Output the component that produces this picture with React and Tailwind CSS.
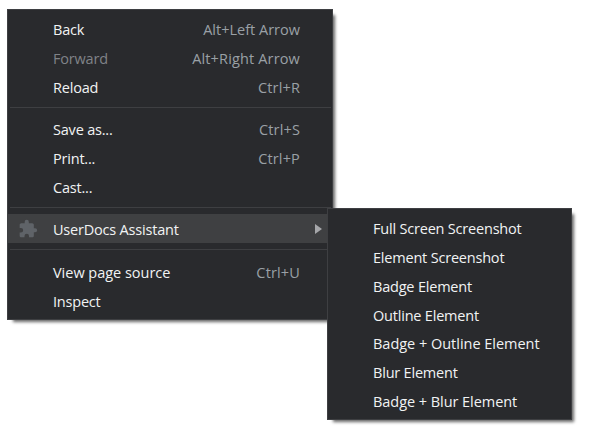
const shadow = "shadow-[4px_4px_3px_-2px_rgba(0,0,0,0.6)]";

function Row({ label, shortcut, disabled, tracking = "tracking-[0.15px]" }) {
  return (
    <div className="flex h-[29px] items-center justify-between pl-[45px] pr-[32px]">
      <span className={disabled ? "text-[#808388]" : "text-[#f1f3f4]"}>{label}</span>
      {shortcut && <span className={`text-[#9aa0a6] ${tracking}`}>{shortcut}</span>}
    </div>
  );
}

function Separator({ className }) {
  return <div className={`ml-[2px] mr-px h-px bg-[#3e3f42] ${className}`} />;
}

const actions = [
  { label: "Full Screen Screenshot" },
  { label: "Element Screenshot" },
  { label: "Badge Element" },
  { label: "Outline Element", className: "-mb-px" },
  { label: "Badge + Outline Element", className: "tracking-[-0.02px]" },
  { label: "Blur Element" },
  { label: "Badge + Blur Element", className: "tracking-[-0.05px]" },
];

export default function App() {
  return (
    <div className="relative h-[444px] w-[596px] overflow-hidden bg-white pl-[7px] pt-[9px] font-['Open_Sans','Noto_Sans',sans-serif] text-[14.5px] leading-[20px] tracking-[-0.2px] whitespace-nowrap">
      <div className={`h-[311px] w-[326px] border border-[#3e3f42] bg-[#292a2d] pt-[5px] ${shadow}`}>
        <Row label="Back" shortcut="Alt+Left Arrow" tracking="tracking-normal" />
        <Row label="Forward" shortcut="Alt+Right Arrow" disabled />
        <Row label="Reload" shortcut="Ctrl+R" />
        <Separator className="mt-[5px] mb-[7px]" />
        <Row label="Save as..." shortcut="Ctrl+S" />
        <Row label="Print..." shortcut="Ctrl+P" />
        <Row label="Cast..." />
        <Separator className="mt-[5px] mb-[6px]" />
        <div className="flex h-[29px] items-center bg-[#3f4042] pl-[10px]">
          <svg className="size-[20px] shrink-0 fill-[#5f6368]" viewBox="0 0 24 24">
            <path d="M20.5 11H19V7c0-1.1-.9-2-2-2h-4V3.500a2.500 2.500 0 0 0-5 0V5H4c-1.100 0-2 .9-2 2v3.800h1.500a2.700 2.700 0 0 1 0 5.400H2V20c0 1.100.9 2 2 2h3.800v-1.500a2.700 2.700 0 0 1 5.400 0V22H17c1.100 0 2-.9 2-2v-4h1.500a2.500 2.500 0 0 0 0-5z" />
          </svg>
          <span className="ml-[15px] pt-[2px] text-[#f1f3f4]">UserDocs Assistant</span>
          <svg className="mr-[10px] ml-auto h-[10px] w-[7px] fill-[#a5a6a9]" viewBox="0 0 7 10">
            <path d="M0 0L7 5L0 10Z" />
          </svg>
        </div>
        <Separator className="mt-[6px] mb-[8px]" />
        <Row label={<span className="tracking-[-0.02px]">View page source</span>} shortcut="Ctrl+U" />
        <Row label="Inspect" />
      </div>
      <div className={`absolute top-[208px] left-[327px] h-[212px] w-[245px] border border-[#3e3f42] bg-[#292a2d] pt-[5px] ${shadow}`}>
        {actions.map(({ label, className = "" }) => (
          <div key={label} className={`flex h-[29px] items-center pl-[45px] text-[#f1f3f4] ${className}`}>
            {label}
          </div>
        ))}
      </div>
    </div>
  );
}
